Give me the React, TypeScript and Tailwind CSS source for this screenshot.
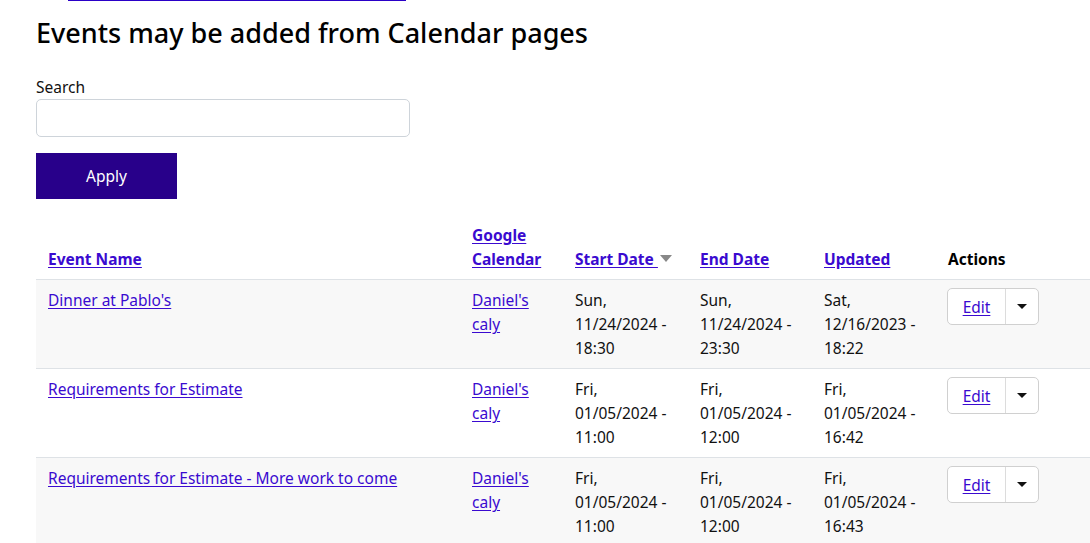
const link = "text-[#3a0ad0] underline underline-offset-2";

type Row = {
  name: string;
  start: [string, string, string];
  end: [string, string, string];
  updated: [string, string, string];
};

const rows: Row[] = [
  {
    name: "Dinner at Pablo's",
    start: ["Sun,", "11/24/2024 -", "18:30"],
    end: ["Sun,", "11/24/2024 -", "23:30"],
    updated: ["Sat,", "12/16/2023 -", "18:22"],
  },
  {
    name: "Requirements for Estimate",
    start: ["Fri,", "01/05/2024 -", "11:00"],
    end: ["Fri,", "01/05/2024 -", "12:00"],
    updated: ["Fri,", "01/05/2024 -", "16:42"],
  },
  {
    name: "Requirements for Estimate - More work to come",
    start: ["Fri,", "01/05/2024 -", "11:00"],
    end: ["Fri,", "01/05/2024 -", "12:00"],
    updated: ["Fri,", "01/05/2024 -", "16:43"],
  },
];

function DateCell({ lines }: { lines: [string, string, string] }) {
  return (
    <td className="px-3 py-2 align-top">
      {lines.map((l, i) => (
        <div key={i} className="whitespace-nowrap">{l}</div>
      ))}
    </td>
  );
}

function EditGroup() {
  return (
    <div className="-ml-px inline-flex h-[37px] rounded-[5px] border border-[#d0d0d0] bg-white">
      <a href="#" className={`${link} flex w-[57px] items-center justify-center`}>Edit</a>
      <button className="flex w-[33px] items-center justify-center border-l border-[#dcdcdc]">
        <span className="h-0 w-0 border-x-[5px] border-t-[5px] border-x-transparent border-t-[#111]" />
      </button>
    </div>
  );
}

export default function App() {
  return (
    <div
      className="h-[543px] w-[1090px] overflow-hidden bg-white text-[15.5px] leading-6 text-[#111]"
      style={{ fontFamily: '"Noto Sans", "Open Sans", sans-serif' }}
    >
      {/* tail of a link scrolled off the top */}
      <div className="ml-[68px] h-px w-[338px] bg-[#2a00c7]" />

      <div className="px-9">
        <h1 className="mt-4 text-[27px] font-medium leading-[32px] text-black">
          Events may be added from Calendar pages
        </h1>

        <div className="mt-[26px]">
          <label className="block">Search</label>
          <input className="block h-[38px] w-[374px] rounded-[5px] border border-[#ced4da] px-3 outline-none" />
        </div>

        <button className="mt-4 h-[46px] w-[141px] bg-[#28008a] text-white">Apply</button>

        <table className="mt-4 w-[1100px] border-collapse text-left">
          <thead>
            <tr className="border-b border-[#dee2e6]">
              <th className="w-[424px] px-3 py-2 align-bottom font-bold">
                <a href="#" className={link}>Event Name</a>
              </th>
              <th className="w-[103px] px-3 py-2 align-bottom font-bold">
                <a href="#" className={link}>Google Calendar</a>
              </th>
              <th className="w-[125px] px-3 py-2 align-bottom font-bold whitespace-nowrap">
                <a href="#" className={link}>Start Date </a>
                <span className="ml-[2px] inline-block h-0 w-0 -translate-y-[3px] border-x-[6px] border-t-[7px] border-x-transparent border-t-[#888]" />
              </th>
              <th className="w-[124px] px-3 py-2 align-bottom font-bold">
                <a href="#" className={link}>End Date</a>
              </th>
              <th className="w-[124px] px-3 py-2 align-bottom font-bold">
                <a href="#" className={link}>Updated</a>
              </th>
              <th className="px-3 py-2 align-bottom font-bold text-black">Actions</th>
            </tr>
          </thead>
          <tbody>
            {rows.map((r, i) => (
              <tr key={i} className={`border-b border-[#dee2e6] ${i % 2 === 0 ? "bg-[#f8f8f8]" : "bg-white"}`}>
                <td className="px-3 py-2 align-top">
                  <a href="#" className={link}>{r.name}</a>
                </td>
                <td className="px-3 py-2 align-top">
                  <a href="#" className={link}>Daniel's</a>
                  <br />
                  <a href="#" className={link}>caly</a>
                </td>
                <DateCell lines={r.start} />
                <DateCell lines={r.end} />
                <DateCell lines={r.updated} />
                <td className="px-3 py-2 align-top">
                  <EditGroup />
                </td>
              </tr>
            ))}
          </tbody>
        </table>
      </div>
    </div>
  );
}
